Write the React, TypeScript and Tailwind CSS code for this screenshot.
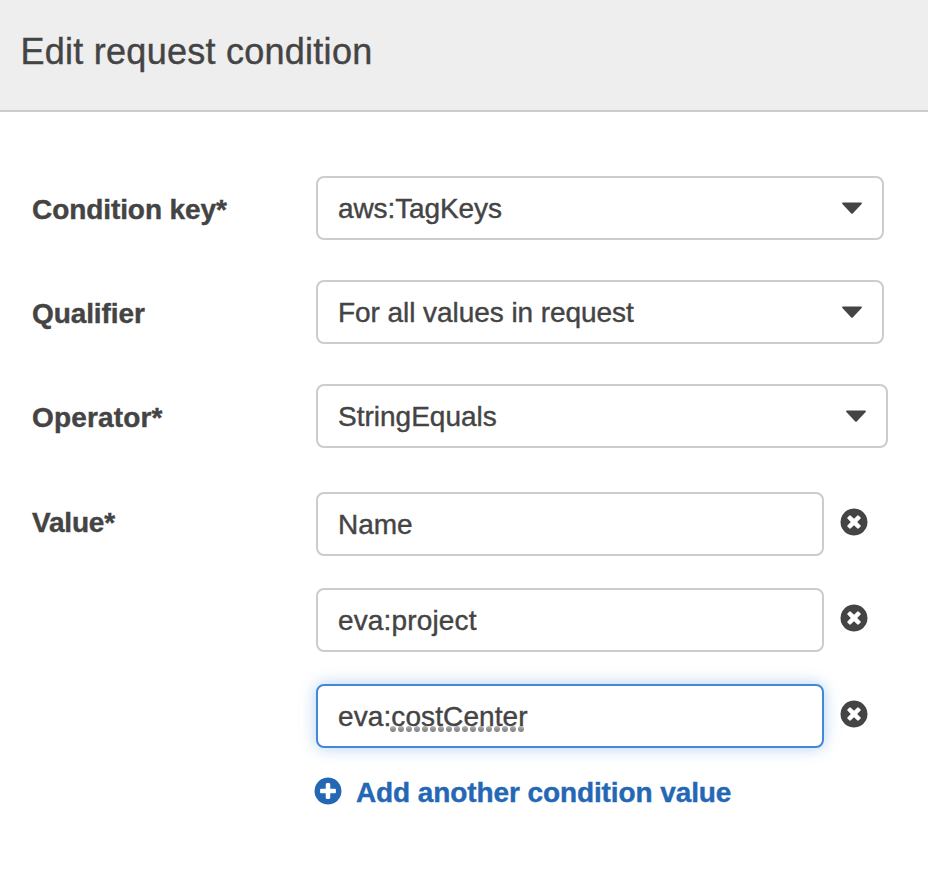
import React from "react";

function RemoveIcon() {
  return (
    <svg className="mb-1 ml-4 size-7 shrink-0" viewBox="-28 100 1592 1592" fill="#444">
      <path d="M1149 1122q0-26-19-45L949 896l181-181q19-19 19-45 0-27-19-46l-90-90q-19-19-46-19-26 0-45 19L768 715 587 534q-19-19-45-19-27 0-46 19l-90 90q-19 19-19 46 0 26 19 45l181 181-181 181q-19 19-19 45 0 27 19 46l90 90q19 19 46 19 26 0 45-19l181-181 181 181q19 19 45 19 27 0 46-19l90-90q19-19 19-46zm387-226q0 209-103 385.5T1153.5 1561 768 1664t-385.5-103T103 1281.5 0 896t103-385.5T382.5 231 768 128t385.5 103T1433 510.5 1536 896z" />
    </svg>
  );
}

function AddIcon() {
  return (
    <svg className="mb-1 mr-[14px] size-7 shrink-0" viewBox="-28 100 1592 1592" fill="currentColor">
      <path d="M1216 960V832q0-26-19-45t-45-19H896V512q0-26-19-45t-45-19H704q-26 0-45 19t-19 45v256H384q-26 0-45 19t-19 45v128q0 26 19 45t45 19h256v256q0 26 19 45t45 19h128q26 0 45-19t19-45v-256h256q26 0 45-19t19-45zm320-64q0 209-103 385.5T1153.5 1561 768 1664t-385.5-103T103 1281.5 0 896t103-385.5T382.5 231 768 128t385.5 103T1433 510.5 1536 896z" />
    </svg>
  );
}

function Label({ children, spacing = "" }: { children: string; spacing?: string }) {
  return (
    <div className={`w-[284px] shrink-0 pt-1 text-[28px] font-bold leading-8 [-webkit-text-stroke:0.4px_#444] ${spacing}`}>
      {children}
    </div>
  );
}

function Select({ value, wide, spacing = "" }: { value: string; wide?: boolean; spacing?: string }) {
  return (
    <div className={`flex h-16 items-center justify-between rounded-lg border-2 border-[#ccc] bg-white px-5 ${wide ? "w-[572px]" : "w-[568px]"}`}>
      <span className={`pt-px text-[28px] leading-8 [-webkit-text-stroke:0.4px_#444] ${spacing}`}>{value}</span>
      <svg width="20" height="12" viewBox="0 0 20 12" fill="#444">
        <path d="M1 0.4H19Q20.4 0.6 19.6 2L11 11.2Q10 12.2 9 11.2L0.4 2Q-0.4 0.6 1 0.4Z" />
      </svg>
    </div>
  );
}

function Value({ children, focused, spacing = "" }: { children: React.ReactNode; focused?: boolean; spacing?: string }) {
  return (
    <div className="flex h-16 items-center">
      <div className={`flex h-16 w-[508px] items-center rounded-lg border-2 bg-white pl-5 pt-px text-[28px] leading-8 [-webkit-text-stroke:0.4px_#444] ${spacing} ${focused ? "border-[#4189d8] shadow-[0_0_16px_rgba(65,137,216,0.4)]" : "border-[#ccc]"}`}>
        {children}
      </div>
      <RemoveIcon />
    </div>
  );
}

function SpellingDots() {
  return (
    <svg className="absolute -left-px top-[25px]" width="136" height="6" viewBox="0 0 136 6">
      <defs>
        <linearGradient id="dot" x1="0" y1="0" x2="0" y2="1">
          <stop offset="0" stopColor="#b4b4b4" />
          <stop offset="1" stopColor="#7c7c7c" />
        </linearGradient>
      </defs>
      {Array.from({ length: 17 }, (_, i) => (
        <circle key={i} cx={3 + i * 8} cy="3" r="3" fill="url(#dot)" />
      ))}
    </svg>
  );
}

export default function App() {
  return (
    <div className="h-[874px] w-[928px] overflow-hidden bg-white font-['Liberation_Sans',Arial,sans-serif] text-[#444]">
      <header className="h-28 border-b-2 border-[#ccc] bg-[#eee] pl-[20.5px] pt-[31px]">
        <h1 className="text-[36px] leading-[42px] tracking-[0.26px] [-webkit-text-stroke:0.4px_#444]">Edit request condition</h1>
      </header>
      <main className="pl-8 pt-16">
        <div className="mb-10 flex h-16 items-center">
          <Label spacing="tracking-[-0.08px]">Condition key*</Label>
          <Select value="aws:TagKeys" spacing="tracking-[-0.1px]" />
        </div>
        <div className="mb-10 flex h-16 items-center">
          <Label spacing="tracking-[-0.1px]">Qualifier</Label>
          <Select value="For all values in request" spacing="tracking-[-0.06px]" />
        </div>
        <div className="mb-11 flex h-16 items-center">
          <Label spacing="tracking-[0.15px]">Operator*</Label>
          <Select value="StringEquals" wide />
        </div>
        <div className="flex">
          <div className="pt-[11px]"><Label spacing="tracking-[-0.2px]">Value*</Label></div>
          <div className="flex flex-col gap-8">
            <Value>Name</Value>
            <Value spacing="tracking-[0.15px]">eva:project</Value>
            <Value focused spacing="tracking-[0.1px]">
              eva:<span className="relative">costCenter<SpellingDots /></span>
            </Value>
          </div>
        </div>
        <div className="ml-[282px] mt-7 flex items-center text-[28px] font-bold leading-8 tracking-[-0.1px] text-[#2467b5] [-webkit-text-stroke:0.4px_#2467b5]">
          <AddIcon />
          <span className="pt-px">Add another condition value</span>
        </div>
      </main>
    </div>
  );
}
